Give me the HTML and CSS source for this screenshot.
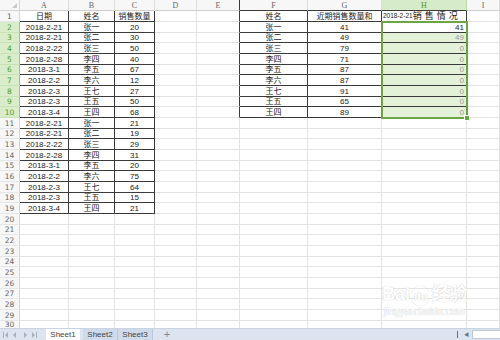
FILE: index.html
```html
<!DOCTYPE html>
<html>
<head>
  <link rel="stylesheet" href="styles.css">
</head>
<body>

  <div class="sheet">
    <table class="grid">
      <colgroup>
        <col class="c-rh">
        <col class="c-a">
        <col class="c-b">
        <col class="c-c">
        <col class="c-d">
        <col class="c-e">
        <col class="c-f">
        <col class="c-g">
        <col class="c-h">
        <col class="c-i">
      </colgroup>
      <thead>
        <tr>
          <th class="corner"><span class="tri"></span></th>
          <th class="ch">A</th>
          <th class="ch">B</th>
          <th class="ch">C</th>
          <th class="ch">D</th>
          <th class="ch kr">E</th>
          <th class="ch kb">F</th>
          <th class="ch kb">G</th>
          <th class="ch kb active">H</th>
          <th class="ch">I</th>
        </tr>
      </thead>
      <tbody>
        <tr><th class="rh">1</th><td class="k">日期</td><td class="k">姓名</td><td class="k">销售数量</td><td></td><td class="kr"></td><td class="k">姓名</td><td class="k">近期销售数量和</td><td class="k title"><span class="t-date">2018-2-21</span><span class="t-cn">销售情况</span></td><td></td></tr>
        <tr><th class="rh on">2</th><td class="k">2018-2-21</td><td class="k">张一</td><td class="k">20</td><td></td><td class="kr"></td><td class="k">张一</td><td class="k">41</td><td class="k val cur">41</td><td></td></tr>
        <tr><th class="rh on">3</th><td class="k">2018-2-21</td><td class="k">张二</td><td class="k">30</td><td></td><td class="kr"></td><td class="k">张二</td><td class="k">49</td><td class="k val sel">49</td><td></td></tr>
        <tr><th class="rh on">4</th><td class="k">2018-2-22</td><td class="k">张三</td><td class="k">50</td><td></td><td class="kr"></td><td class="k">张三</td><td class="k">79</td><td class="k val sel">0</td><td></td></tr>
        <tr><th class="rh on">5</th><td class="k">2018-2-28</td><td class="k">李四</td><td class="k">40</td><td></td><td class="kr"></td><td class="k">李四</td><td class="k">71</td><td class="k val sel">0</td><td></td></tr>
        <tr><th class="rh on">6</th><td class="k">2018-3-1</td><td class="k">李五</td><td class="k">67</td><td></td><td class="kr"></td><td class="k">李五</td><td class="k">87</td><td class="k val sel">0</td><td></td></tr>
        <tr><th class="rh on">7</th><td class="k">2018-2-2</td><td class="k">李六</td><td class="k">12</td><td></td><td class="kr"></td><td class="k">李六</td><td class="k">87</td><td class="k val sel">0</td><td></td></tr>
        <tr><th class="rh on">8</th><td class="k">2018-2-3</td><td class="k">王七</td><td class="k">27</td><td></td><td class="kr"></td><td class="k">王七</td><td class="k">91</td><td class="k val sel">0</td><td></td></tr>
        <tr><th class="rh on">9</th><td class="k">2018-2-3</td><td class="k">王五</td><td class="k">50</td><td></td><td class="kr"></td><td class="k">王五</td><td class="k">65</td><td class="k val sel">0</td><td></td></tr>
        <tr><th class="rh on">10</th><td class="k">2018-3-4</td><td class="k">王四</td><td class="k">68</td><td></td><td class="kr"></td><td class="k">王四</td><td class="k">89</td><td class="k val sel">0</td><td></td></tr>
        <tr><th class="rh">11</th><td class="k">2018-2-21</td><td class="k">张一</td><td class="k">21</td><td></td><td></td><td></td><td></td><td></td><td></td></tr>
        <tr><th class="rh">12</th><td class="k">2018-2-21</td><td class="k">张二</td><td class="k">19</td><td></td><td></td><td></td><td></td><td></td><td></td></tr>
        <tr><th class="rh">13</th><td class="k">2018-2-22</td><td class="k">张三</td><td class="k">29</td><td></td><td></td><td></td><td></td><td></td><td></td></tr>
        <tr><th class="rh">14</th><td class="k">2018-2-28</td><td class="k">李四</td><td class="k">31</td><td></td><td></td><td></td><td></td><td></td><td></td></tr>
        <tr><th class="rh">15</th><td class="k">2018-3-1</td><td class="k">李五</td><td class="k">20</td><td></td><td></td><td></td><td></td><td></td><td></td></tr>
        <tr><th class="rh">16</th><td class="k">2018-2-2</td><td class="k">李六</td><td class="k">75</td><td></td><td></td><td></td><td></td><td></td><td></td></tr>
        <tr><th class="rh">17</th><td class="k">2018-2-3</td><td class="k">王七</td><td class="k">64</td><td></td><td></td><td></td><td></td><td></td><td></td></tr>
        <tr><th class="rh">18</th><td class="k">2018-2-3</td><td class="k">王五</td><td class="k">15</td><td></td><td></td><td></td><td></td><td></td><td></td></tr>
        <tr><th class="rh">19</th><td class="k">2018-3-4</td><td class="k">王四</td><td class="k">21</td><td></td><td></td><td></td><td></td><td></td><td></td></tr>
        <tr><th class="rh">20</th><td></td><td></td><td></td><td></td><td></td><td></td><td></td><td></td><td></td></tr>
        <tr><th class="rh">21</th><td></td><td></td><td></td><td></td><td></td><td></td><td></td><td></td><td></td></tr>
        <tr><th class="rh">22</th><td></td><td></td><td></td><td></td><td></td><td></td><td></td><td></td><td></td></tr>
        <tr><th class="rh">23</th><td></td><td></td><td></td><td></td><td></td><td></td><td></td><td></td><td></td></tr>
        <tr><th class="rh">24</th><td></td><td></td><td></td><td></td><td></td><td></td><td></td><td></td><td></td></tr>
        <tr><th class="rh">25</th><td></td><td></td><td></td><td></td><td></td><td></td><td></td><td></td><td></td></tr>
        <tr><th class="rh">26</th><td></td><td></td><td></td><td></td><td></td><td></td><td></td><td></td><td></td></tr>
        <tr><th class="rh">27</th><td></td><td></td><td></td><td></td><td></td><td></td><td></td><td></td><td></td></tr>
        <tr><th class="rh">28</th><td></td><td></td><td></td><td></td><td></td><td></td><td></td><td></td><td></td></tr>
        <tr><th class="rh">29</th><td></td><td></td><td></td><td></td><td></td><td></td><td></td><td></td><td></td></tr>
        <tr><th class="rh last">30</th><td></td><td></td><td></td><td></td><td></td><td></td><td></td><td></td><td></td></tr>
      </tbody>
    </table>

    <!-- selection H2:H10 -->
    <div class="selection"><span class="handle"></span></div>

    <div class="watermark">
      <div class="wm-logo">Bai<span class="wm-du">du</span>经验</div>
      <div class="wm-url">jingyan.baidu.com</div>
    </div>
  </div>

  <div class="tabbar">
    <svg class="nav" width="40" height="12" viewBox="0 0 40 12">
      <g fill="#a7b0bd">
        <rect x="3" y="3" width="1" height="6"/>
        <path d="M8 3 L5 6 L8 9 Z"/>
        <path d="M16 3 L13 6 L16 9 Z"/>
        <path d="M24 3 L27 6 L24 9 Z"/>
        <path d="M32 3 L35 6 L32 9 Z"/>
        <rect x="36" y="3" width="1" height="6"/>
      </g>
    </svg>
    <div class="tab current">Sheet1</div>
    <div class="tab">Sheet2</div>
    <div class="tab">Sheet3</div>
    <div class="add">+</div>
    <div class="spacer"></div>
    <div class="split"></div>
    <div class="left-arrow">&#9664;</div>
    <div class="hscroll"></div>
  </div>

</body>
</html>
```

FILE: styles.css
```css
body {
  margin: 0;
  width: 500px;
  height: 340px;
  overflow: hidden;
  background: #ffffff;
  font-family: 'Liberation Sans', 'Noto Sans CJK SC', sans-serif;
  color: #222;
}

.sheet {
  position: relative;
  height: 328px;
  overflow: hidden;
}

.grid {
  border-collapse: separate;
  border-spacing: 0;
  table-layout: fixed;
  width: 500px;
}

.c-rh { width: 20px; }
.c-a { width: 49px; }
.c-b { width: 46px; }
.c-c { width: 40px; }
.c-d { width: 42px; }
.c-e { width: 43px; }
.c-f { width: 68px; }
.c-g { width: 74px; }
.c-h { width: 85px; }
.c-i { width: 33px; }

.grid tr {
  height: 11px;
}

.grid tbody tr:nth-child(3n) {
  height: 10px;
}

.grid td,
.grid th {
  padding: 0;
  border-right: 1px solid #e3e3e3;
  border-bottom: 1px solid #e3e3e3;
  font-size: 8px;
  line-height: 9px;
  font-weight: normal;
  text-align: center;
  white-space: nowrap;
  overflow: hidden;
}

/* headers */
.grid .corner {
  position: relative;
  background: #f7f7f7;
  border-right-color: #d4d4d4;
  border-bottom-color: #d4d4d4;
}

.tri {
  position: absolute;
  right: 2px;
  bottom: 2px;
  width: 0;
  height: 0;
  border-left: 5px solid transparent;
  border-bottom: 5px solid #c9c9c9;
}

.grid .ch {
  background: #f7f7f7;
  color: #666;
  font-family: 'Liberation Serif', serif;
  border-bottom-color: #cfcfcf;
  border-right-color: #dcdcdc;
}

.grid .ch.active {
  background: #d6ebc7;
  color: #4f9a2c;
  border-right-color: #b9d7a3;
}

.grid .rh {
  background: #f7f7f7;
  color: #666;
  font-family: 'DejaVu Sans', sans-serif;
  font-size: 7.5px;
  border-right-color: #d4d4d4;
  border-bottom-color: #e6e6e6;
}

.grid .rh.last {
  vertical-align: top;
  line-height: 8px;
}

.grid .rh.on {
  background: #d9edcb;
  color: #4f9a2c;
  border-right-color: #9cc77f;
  border-bottom-color: #c7e2b4;
}

/* black cell borders */
.grid .k {
  border-right-color: #3a3a3a;
  border-bottom-color: #3a3a3a;
}

.grid .kr {
  border-right-color: #3a3a3a;
}

.grid .kb {
  border-bottom-color: #3a3a3a;
}

.grid .title {
  text-align: left;
  padding-left: 1px;
  line-height: 10px;
}

.t-date {
  font-size: 6.5px;
}

.t-cn {
  font-size: 9px;
  letter-spacing: 3px;
  vertical-align: top;
}

.grid .val {
  text-align: right;
  padding-right: 2px;
  color: #9a9a9a;
}

.grid .cur {
  color: #222;
}

.grid .sel {
  background: #e3f1d9;
}

.selection {
  position: absolute;
  left: 381px;
  top: 21px;
  width: 87px;
  height: 98px;
  box-sizing: border-box;
  border: 2px solid #6ba544;
  pointer-events: none;
}

.handle {
  position: absolute;
  right: -4px;
  bottom: -4px;
  width: 4px;
  height: 4px;
  background: #6ba544;
  border: 1px solid #ffffff;
}

/* watermark */
.watermark {
  position: absolute;
  left: 382px;
  top: 284px;
  color: #ffffff;
  text-shadow: 0 0 1px #cfcfcf, 0 0 1px #cfcfcf;
  pointer-events: none;
}

.wm-logo {
  font-family: 'Liberation Sans', 'Noto Sans CJK SC', sans-serif;
  font-size: 18px;
  font-weight: bold;
  line-height: 20px;
}

.wm-du {
  display: inline-block;
  font-size: 11px;
  margin: 0 2px;
  padding: 0 2px;
  border-radius: 8px;
  box-shadow: 0 0 1px #cfcfcf;
}

.wm-url {
  font-size: 10px;
  line-height: 12px;
  padding-left: 2px;
}

/* sheet tabs */
.tabbar {
  display: flex;
  align-items: stretch;
  height: 12px;
  background: #dbe4ef;
  border-top: 1px solid #c9d4e2;
  box-sizing: border-box;
  font-size: 8px;
  color: #444;
}

.nav {
  display: block;
}

.tab {
  width: 34px;
  text-align: center;
  line-height: 11px;
  background: #cfdbeb;
  border-right: 1px solid #b9c7d9;
}

.tab.current {
  background: #ffffff;
  margin-left: 6px;
  margin-right: 3px;
  border-right: none;
}

.add {
  width: 20px;
  padding-left: 4px;
  text-align: center;
  font-size: 11px;
  line-height: 10px;
  color: #7d8796;
}

.spacer {
  flex: 1;
}

.split {
  width: 1px;
  margin: 2px 6px 2px 0;
  background: #6a7380;
}

.left-arrow {
  font-size: 5px;
  line-height: 11px;
  color: #6a7380;
  margin-right: 3px;
}

.hscroll {
  width: 27px;
  margin: 1px 0 1px 0;
  background: #ffffff;
  border: 1px solid #b9c7d9;
  border-right: none;
}
```
